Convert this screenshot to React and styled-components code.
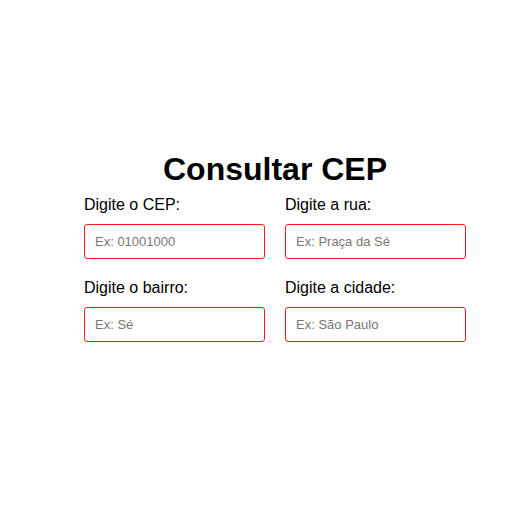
import React from "react";
import styled, { createGlobalStyle } from "styled-components";

const GlobalStyle = createGlobalStyle`
  html, body {
    margin: 0;
    padding: 0;
    background: #ffffff;
    font-family: "Liberation Sans", Arial, sans-serif;
    color: #000000;
  }
  * { box-sizing: border-box; }
`;

const Page = styled.main`
  display: flex;
  flex-direction: column;
  align-items: center;
  padding: 151px 0 0 24px;
`;

const Title = styled.h1`
  margin: 0 0 8px;
  font-size: 32px;
  font-weight: 700;
  line-height: normal;
`;

const Form = styled.form`
  display: grid;
  grid-template-columns: 181px 181px;
  column-gap: 20px;
  row-gap: 20px;
`;

const Field = styled.div`
  display: flex;
  flex-direction: column;
  gap: 10px;
`;

const Label = styled.label`
  font-size: 16px;
  line-height: normal;
`;

const Input = styled.input`
  height: 35px;
  width: 100%;
  padding: 0 10px;
  border: 1px solid #ff1a1a;
  border-radius: 3px;
  font-family: "Liberation Sans", Arial, sans-serif;
  font-size: 13px;
  outline: none;
  &::placeholder { color: #777777; }
`;

const fields = [
  { id: "cep", label: "Digite o CEP:", placeholder: "Ex: 01001000" },
  { id: "rua", label: "Digite a rua:", placeholder: "Ex: Praça da Sé" },
  { id: "bairro", label: "Digite o bairro:", placeholder: "Ex: Sé" },
  { id: "cidade", label: "Digite a cidade:", placeholder: "Ex: São Paulo" },
];

export default function App() {
  return (
    <>
      <GlobalStyle />
      <Page>
        <Title>Consultar CEP</Title>
        <Form onSubmit={(e) => e.preventDefault()}>
          {fields.map((f) => (
            <Field key={f.id}>
              <Label htmlFor={f.id}>{f.label}</Label>
              <Input id={f.id} type="text" placeholder={f.placeholder} />
            </Field>
          ))}
        </Form>
      </Page>
    </>
  );
}
